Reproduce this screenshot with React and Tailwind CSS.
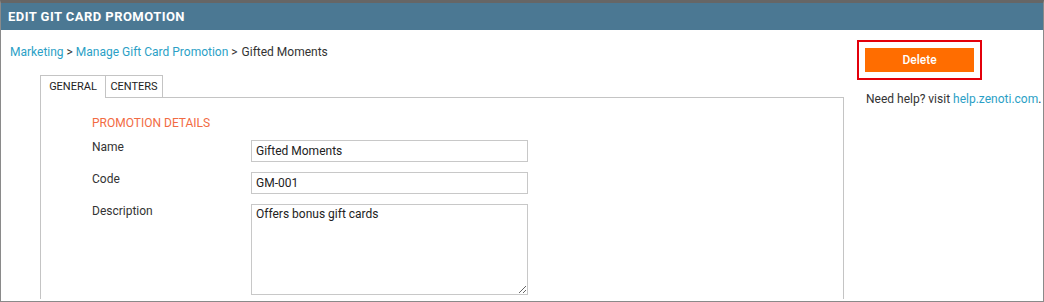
import React from 'react';

const font = { fontFamily: 'Roboto, "Liberation Sans", sans-serif' };

const Row = ({ label, children }) => (
  <div className="flex items-start">
    <div className="-mt-[1px] w-[159px] text-[12px] leading-[16px] text-[#333]">{label}</div>
    {children}
  </div>
);

export default function App() {
  return (
    <div
      className="flex h-[302px] w-[1044px] flex-col overflow-hidden border border-t-[3px] border-[#8a8a8a] border-t-[#666] bg-white"
      style={font}
    >
      {/* titre */}
      <div className="flex h-[27px] shrink-0 items-center bg-[#4b7893] pl-[7px] text-[13px] font-bold tracking-[0.45px] text-white">
        EDIT GIT CARD PROMOTION
      </div>

      <div className="flex min-h-0 flex-1">
        {/* colonne principale */}
        <div className="flex w-[856px] flex-col">
          <div className="mt-[14px] pl-[9px] text-[12px] leading-[16px] text-[#333]">
            <a className="text-[#2b9fc6]">Marketing</a>
            <span> &gt; </span>
            <a className="text-[#2b9fc6]">Manage Gift Card Promotion</a>
            <span> &gt; </span>
            <span className="ml-[1px]">Gifted Moments</span>
          </div>

          <div className="ml-[39px] mt-[15px] w-[804px]">
            <div className="flex h-[23px] items-stretch text-[11px] text-[#222]">
              <div className="flex w-[66px] items-center justify-center border border-b-0 border-[#c4c4c4] bg-white pt-[1px]">
                GENERAL
              </div>
              <div className="flex w-[57px] items-center justify-center border border-l-0 border-[#c4c4c4] pt-[1px]">
                CENTERS
              </div>
            </div>
            <div className="-mt-px flex flex-col gap-[10px] border border-b-0 border-[#c4c4c4] pb-[4px] pl-[51px] pt-[17px]">
              <div className="text-[12px] leading-[16px] text-[#f26b43]">PROMOTION DETAILS</div>
              <div className="-mt-[1px] flex flex-col gap-[10px]">
                <Row label="Name">
                  <input
                    readOnly
                    value="Gifted Moments"
                    className="h-[22px] w-[277px] border border-[#c8c8c8] px-[4px] text-[12px] text-[#222] outline-none"
                  />
                </Row>
                <Row label="Code">
                  <input
                    readOnly
                    value="GM-001"
                    className="h-[22px] w-[277px] border border-[#c8c8c8] px-[4px] text-[12px] text-[#222] outline-none"
                  />
                </Row>
                <Row label="Description">
                  <textarea
                    readOnly
                    value="Offers bonus gift cards"
                    className="h-[91px] w-[277px] border border-[#c8c8c8] px-[4px] py-[1px] text-[12px] leading-[16px] text-[#222] outline-none"
                  />
                </Row>
              </div>
            </div>
          </div>
        </div>

        {/* colonne droite */}
        <div className="flex flex-1 flex-col pt-[10px]">
          <div className="w-[125px] border-2 border-[#e3000b] p-[6px]">
            <button className="flex h-[24px] w-[109px] items-center justify-center bg-[#ff6d00] text-[12px] font-medium text-white">
              Delete
            </button>
          </div>
          <div className="mt-[11px] pl-[9px] text-[12px] leading-[16px] text-[#333]">
            Need help? visit <a className="text-[#2b9fc6]">help.zenoti.com</a>.
          </div>
        </div>
      </div>
    </div>
  );
}
